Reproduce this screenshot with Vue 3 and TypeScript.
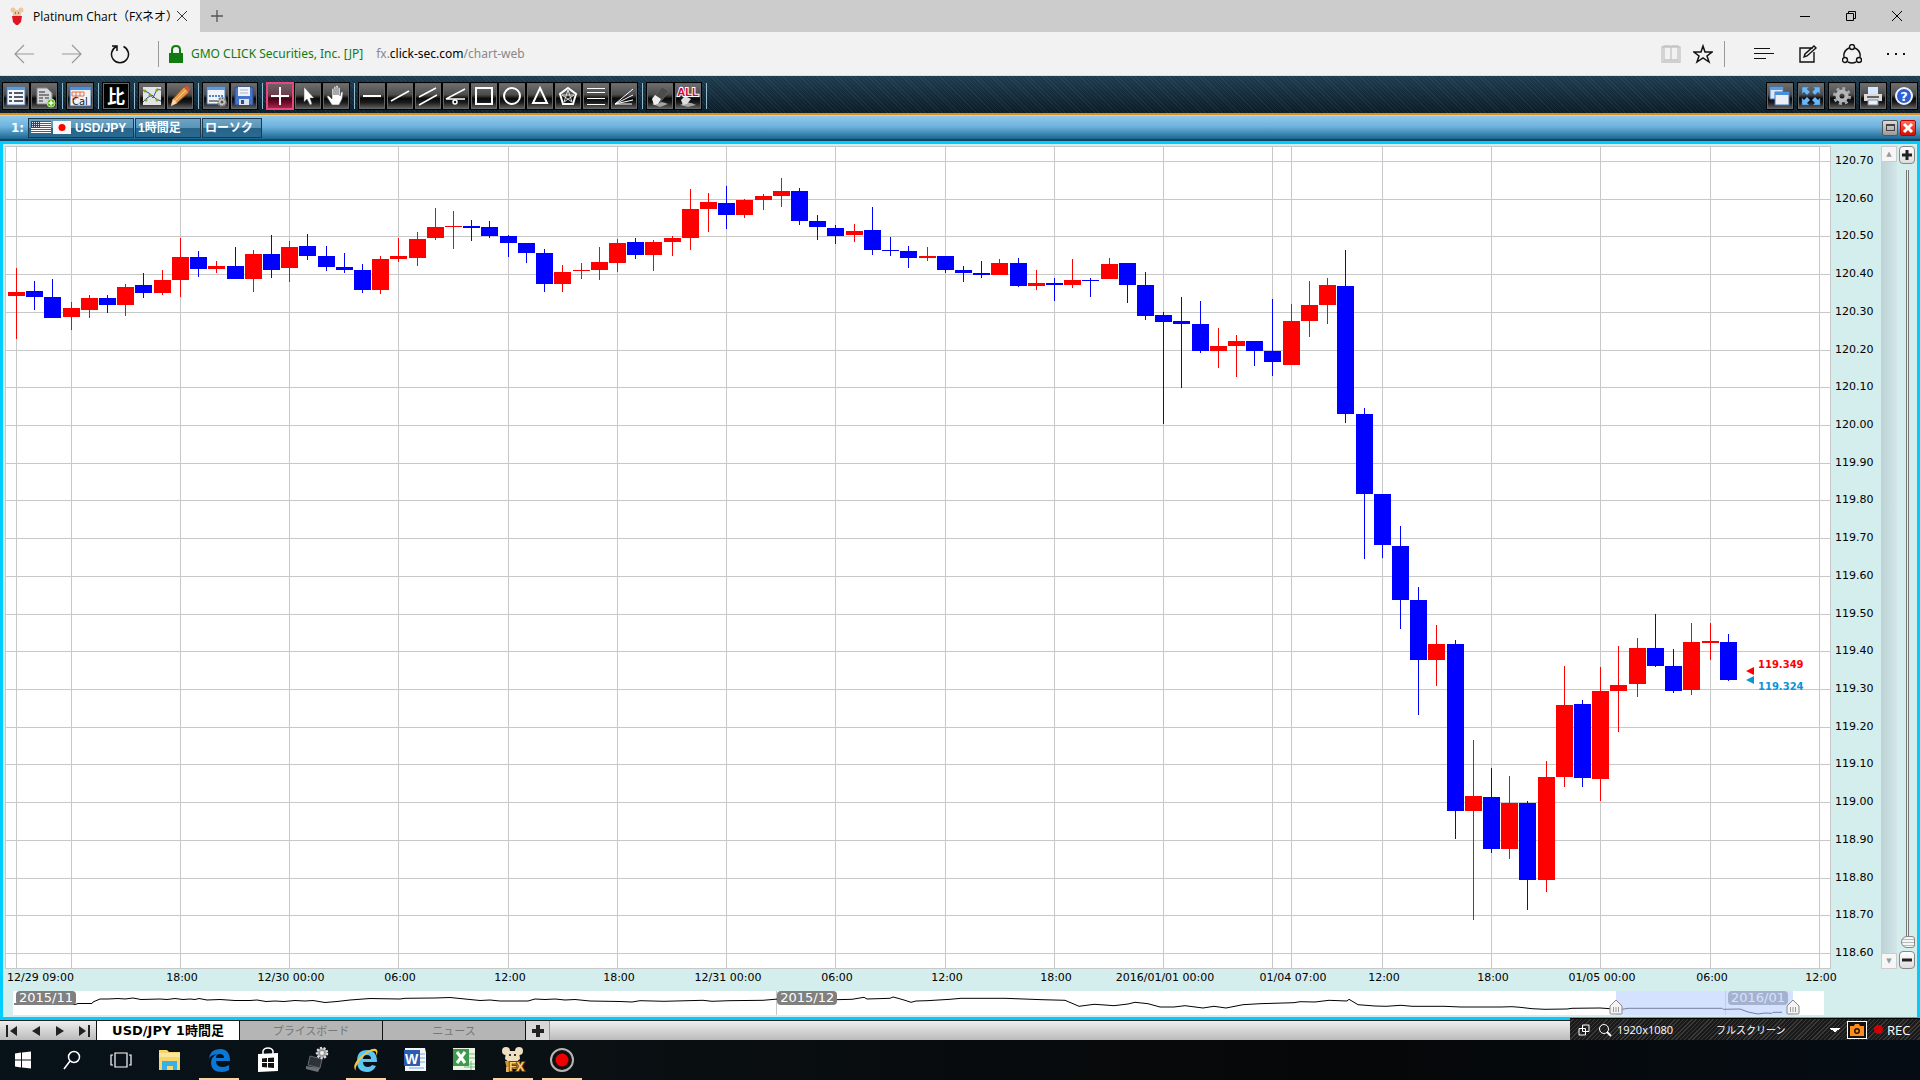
<script setup lang="ts">
import { computed, onBeforeUnmount, onMounted, ref } from 'vue'

interface Tool { id: string; label: string }
type Candle = [kind: 'R' | 'B', high: number, top: number, bottom: number, low: number]

/* Icon bodies, drawn on a 26 x 26 grid */
const icons: Record<string, string> = {
  list: '<path d="M4 4h18v18H4z" fill="#f4f6f9" stroke="#4a78b8"/><path d="M4 4h18v3H4z" fill="#5b9be0"/><path d="M6 10h3M6 14h3M6 18h3M11 10h9M11 14h9M11 18h9" stroke="#555b66" stroke-width="2"/>',
  addDoc: '<path d="M6 5h10l5 5v11H6z" fill="#d5d7da" stroke="#888"/><path d="M8 9h6M8 12h10M8 15h4M14 15h4M8 18h4" stroke="#666" stroke-width="1.500"/><circle cx="20" cy="20" r="4" fill="#55b51e" stroke="#b9ef83"/><path d="M17.500 20h5M20 17.500v5" stroke="#fff" stroke-width="1.500"/>',
  cal: '<path d="M3 4h21v19H3z" fill="#f2f2f2" stroke="#3d6cb0"/><path d="M3 4h21v3H3z" fill="#4d8fd8"/><path d="M5 9h12v4H5zM9 9v7M13 9v4M5 16h4" fill="none" stroke="#e36d4a"/><text x="5" y="22" font-size="10" font-family="DejaVu Sans" fill="#222">Cal</text>',
  compare: '<path d="M0 0h26v26H0z" fill="#000"/><text x="4" y="20" font-size="18" font-weight="700" font-family="Noto Sans CJK JP" fill="#fff">比</text>',
  graph: '<path d="M4 4h18v18H4z" fill="#e4e4e4"/><path d="M4 7l6 3 4 5 4-9 4 1M4 19l4-4 5-3 4 4 5 2" fill="none" stroke="#31539c"/><g fill="#7ea52d"><circle cx="6" cy="8" r="1.500"/><circle cx="11" cy="12" r="1.500"/><circle cx="18" cy="7" r="1.500"/><circle cx="7" cy="17" r="1.500"/><circle cx="18" cy="17" r="1.500"/></g>',
  pencil: '<path d="M4 23l2-7L17 4l5 5L10 20z" fill="#e49b4b" stroke="#9a5a22"/><path d="M4 23l2-7 4 4z" fill="#f4ddb9"/><path d="M17 4l2-1q4 0 4 4l-2 2z" fill="#d6503a"/><path d="M8 18L19 7" stroke="#ffd08b"/>',
  panel: '<path d="M4 4h18v17H4z" fill="#f1f3f6" stroke="#4a78b8"/><path d="M4 4h18v3H4z" fill="#5b9be0"/><path d="M6 13h14" stroke="#4a86cc" stroke-width="2" stroke-dasharray="2 1"/><path d="M6 18h8" stroke="#888" stroke-width="2"/><circle cx="19" cy="19" r="4" fill="#c9c9c9" stroke="#777" stroke-width="2" stroke-dasharray="2 1"/><circle cx="19" cy="19" r="1.500" fill="#555"/>',
  save: '<path d="M4 4h17l1 1v17H4z" fill="#4672c8" stroke="#2c4d95"/><path d="M7 4h12v9H7z" fill="#edf2fa"/><path d="M9 7h8M9 10h8" stroke="#aab6ca"/><path d="M8 16h10v6H8z" fill="#dde4f0"/><path d="M10 17h3v4h-3z" fill="#2c4d95"/>',
  cross: '<path d="M4 13h18M13 4v18" stroke="#fff" stroke-width="2"/>',
  arrow: '<path d="M9 4v15l3-3 3 6 2-1-2-6h4z" fill="#fff" stroke="#555" stroke-width=".5"/>',
  hand: '<path d="M9 22l-5-8q0-2 2-1l3 3V6q1-2 2 0v6-8q1-2 2 0v8-9q1-2 2 0v9-7q1-2 2 0v8l1-4q2-1 2 1l-1 6-3 6z" fill="#fff" stroke="#555" stroke-width=".6"/>',
  hline: '<path d="M4 13h18" stroke="#fff" stroke-width="2"/>',
  line: '<path d="M4 18L22 8" stroke="#fff" stroke-width="1.500"/>',
  parallel: '<path d="M4 14L21 5M4 22L22 12" stroke="#fff" stroke-width="1.500"/>',
  angle: '<path d="M22 6L3 16h19" fill="none" stroke="#fff" stroke-width="1.500"/><circle cx="12" cy="19" r="2" fill="none" stroke="#fff" stroke-width="1.500"/>',
  rect: '<path d="M5 5h16v16H5z" fill="none" stroke="#fff" stroke-width="2"/>',
  circle: '<circle cx="13" cy="13" r="8" fill="none" stroke="#fff" stroke-width="2"/>',
  triangle: '<path d="M13 5l7 15H6z" fill="none" stroke="#fff" stroke-width="2"/>',
  penta: '<path d="M13 5l8 6-3 10H8L5 11z" fill="none" stroke="#fff" stroke-width="2"/><path d="M13 7l4 12-10-7h12L9 19z" fill="none" stroke="#ddd"/>',
  fib: '<path d="M4 5.500h18M4 9.500h18M4 15.500h18M4 21.500h18" stroke="#fff"/>',
  fan: '<path d="M22 6L4 21l18-9M4 21l18-4M4 21l17 0" fill="none" stroke="#fff"/>',
  eraser: '<path d="M5 21q8-4 16 0l-8 3z" fill="#a5a5a5"/><path d="M6 15L15 4l7 4-9 12-4 1z" fill="#4c4c4c" stroke="#777" stroke-width=".5"/><path d="M5 16l3-4 6 4-3 5-4 1z" fill="#eee"/>',
  eraseAll: '<path d="M5 22q8-5 16 0l-8 2z" fill="#a5a5a5"/><path d="M6 17l4-4 6 3-4 5-4 1z" fill="#ddd"/><text x="13" y="13" text-anchor="middle" font-size="11" font-weight="700" font-family="Liberation Sans" fill="#cc0842" stroke="#fff" stroke-width="2" paint-order="stroke">ALL</text>',
  windows: '<path d="M3 4h13v12H3z" fill="#dfe7f2" stroke="#3f7cc4"/><path d="M3 4h13v3H3z" fill="#5b9be0"/><path d="M8 9h14v13H8z" fill="#eceff4" stroke="#3f7cc4"/><path d="M8 9h14v3H8z" fill="#4a8fdc"/>',
  expand: '<g fill="#6fb7f3" stroke="#2a6fb5" stroke-width=".5"><path d="M4 4h7l-2 2 3 3-3 3-3-3-2 2zM22 4h-7l2 2-3 3 3 3 3-3 2 2zM4 22h7l-2-2 3-3-3-3-3 3-2-2zM22 22h-7l2-2-3-3 3-3 3 3 2-2z"/></g>',
  gear: '<circle cx="13" cy="13" r="7.500" fill="none" stroke="#a6a8aa" stroke-width="3" stroke-dasharray="3 2.900"/><circle cx="13" cy="13" r="4.500" fill="none" stroke="#b4b6b8" stroke-width="4"/>',
  print: '<path d="M8 4h10v7H8z" fill="#d6e8fb"/><path d="M4 11h18v7H4z" fill="#d9dadc"/><path d="M7 13h12v2H7z" fill="#666"/><path d="M8 17h10v5H8z" fill="#e8f1fb" stroke="#889"/>',
  help: '<circle cx="13" cy="13" r="8" fill="#2d5fd3" stroke="#eef3ff" stroke-width="2"/><text x="13" y="18" text-anchor="middle" font-size="13" font-weight="700" font-family="DejaVu Sans" fill="#fff">?</text>',
}

const toolGroups: Tool[][] = [
  [{ id: 'list', label: 'List' }, { id: 'addDoc', label: 'Add' }],
  [{ id: 'cal', label: 'Calendar' }],
  [{ id: 'compare', label: 'Compare' }],
  [{ id: 'graph', label: 'Indicators' }, { id: 'pencil', label: 'Draw' }],
  [{ id: 'panel', label: 'Settings' }, { id: 'save', label: 'Save' }],
  [{ id: 'cross', label: 'Crosshair' }, { id: 'arrow', label: 'Select' }, { id: 'hand', label: 'Pan' }],
  [
    { id: 'hline', label: 'Horizontal line' }, { id: 'line', label: 'Trend line' },
    { id: 'parallel', label: 'Parallel lines' }, { id: 'angle', label: 'Angle' },
    { id: 'rect', label: 'Rectangle' }, { id: 'circle', label: 'Circle' },
    { id: 'triangle', label: 'Triangle' }, { id: 'penta', label: 'Pentagon' },
    { id: 'fib', label: 'Fibonacci' }, { id: 'fan', label: 'Fan' },
  ],
  [{ id: 'eraser', label: 'Erase' }, { id: 'eraseAll', label: 'Erase all' }],
]
const rightTools: Tool[] = [
  { id: 'windows', label: 'Windows' }, { id: 'expand', label: 'Full screen' },
  { id: 'gear', label: 'Options' }, { id: 'print', label: 'Print' }, { id: 'help', label: 'Help' },
]
const activeTool = ref('cross')

/* Hourly candles: distances below the top of the price range, 1131 units to the yen */
const candles: Candle[] = [
  ['R', 385, 457, 470, 597], ['B', 424, 454, 473, 512], ['B', 418, 472, 536, 536], ['R', 487, 504, 533, 572],
  ['R', 466, 475, 510, 536], ['B', 466, 475, 497, 521], ['R', 433, 442, 497, 530], ['B', 400, 436, 461, 476],
  ['R', 391, 421, 461, 467], ['R', 295, 352, 422, 473], ['B', 334, 352, 389, 413], ['R', 364, 379, 389, 401],
  ['B', 322, 379, 419, 419], ['R', 331, 343, 419, 458], ['B', 286, 343, 392, 416], ['R', 304, 322, 386, 428],
  ['B', 283, 319, 350, 361], ['B', 319, 349, 383, 395], ['B', 340, 382, 392, 401], ['B', 373, 391, 452, 461],
  ['R', 349, 358, 452, 463], ['R', 295, 349, 359, 368], ['R', 277, 298, 356, 380], ['R', 205, 262, 296, 302],
  ['R', 214, 259, 263, 328], ['B', 241, 259, 266, 305], ['B', 244, 262, 290, 296], ['B', 286, 289, 311, 353],
  ['B', 310, 310, 341, 371], ['B', 328, 340, 434, 458], ['R', 376, 397, 434, 458], ['R', 370, 391, 395, 419],
  ['R', 322, 367, 392, 422], ['R', 298, 310, 371, 398], ['B', 295, 307, 347, 359], ['R', 301, 307, 347, 395],
  ['R', 289, 295, 308, 350], ['R', 148, 208, 296, 332], ['R', 160, 187, 209, 278], ['B', 139, 190, 227, 269],
  ['R', 178, 181, 227, 236], ['R', 163, 169, 182, 212], ['R', 115, 154, 170, 203], ['B', 145, 154, 245, 257],
  ['B', 226, 244, 263, 302], ['B', 256, 265, 290, 314], ['R', 253, 274, 287, 308], ['B', 202, 271, 332, 347],
  ['B', 292, 331, 335, 350], ['B', 319, 334, 356, 386], ['R', 322, 349, 356, 365], ['B', 349, 349, 392, 401],
  ['B', 379, 391, 401, 428], ['B', 364, 400, 407, 416], ['R', 358, 370, 407, 407], ['B', 355, 370, 440, 443],
  ['R', 391, 430, 440, 452], ['B', 415, 430, 437, 485], ['R', 358, 421, 437, 446], ['B', 415, 421, 423, 473],
  ['R', 355, 373, 419, 419], ['B', 370, 370, 437, 491], ['B', 397, 436, 530, 542], ['B', 517, 526, 548, 854],
  ['B', 472, 544, 554, 746], ['B', 484, 553, 635, 641], ['R', 565, 619, 635, 686], ['R', 586, 604, 620, 713],
  ['B', 604, 604, 635, 680], ['B', 478, 634, 668, 709], ['R', 493, 544, 677, 677], ['R', 424, 496, 545, 593],
  ['R', 415, 436, 497, 554], ['B', 331, 439, 824, 851], ['B', 805, 823, 1064, 1259], ['B', 1063, 1063, 1217, 1256],
  ['B', 1159, 1219, 1382, 1469], ['B', 1342, 1381, 1562, 1727], ['R', 1456, 1513, 1562, 1640], ['B', 1501, 1513, 2015, 2099],
  ['R', 1801, 1969, 2015, 2342], ['B', 1885, 1972, 2129, 2141], ['R', 1909, 1990, 2129, 2159], ['B', 1984, 1990, 2222, 2312],
  ['R', 1864, 1912, 2222, 2258], ['R', 1579, 1696, 1913, 1943], ['B', 1681, 1693, 1916, 1943], ['R', 1582, 1654, 1919, 1985],
  ['R', 1519, 1636, 1655, 1778], ['R', 1495, 1525, 1634, 1673], ['B', 1423, 1525, 1580, 1583], ['B', 1528, 1579, 1655, 1661],
  ['R', 1450, 1507, 1652, 1667], ['R', 1450, 1504, 1511, 1562], ['B', 1483, 1507, 1622, 1625],
]

const timeMarks: [number, string][] = [
  [0, '12/29 09:00'], [3, ''], [9, '18:00'], [15, '12/30 00:00'], [21, '06:00'], [27, '12:00'], [33, '18:00'],
  [39, '12/31 00:00'], [45, '06:00'], [51, '12:00'], [57, '18:00'], [63, '2016/01/01 00:00'], [69, ''],
  [70, '01/04 07:00'], [75, '12:00'], [81, '18:00'], [87, '01/05 00:00'], [93, '06:00'], [99, '12:00'],
]

const plot = ref<HTMLElement | null>(null)
const width = ref(1826)
const height = ref(823)
let observer: ResizeObserver | undefined
onMounted(() => {
  observer = new ResizeObserver(([entry]) => {
    width.value = entry.contentRect.width
    height.value = entry.contentRect.height
  })
  if (plot.value) observer.observe(plot.value)
})
onBeforeUnmount(() => observer?.disconnect())

const xOf = (hour: number) => Math.round(((11 + 18.21 * hour) * width.value) / 1826)
const yOf = (units: number) => Math.round(((units - 19) * height.value) / 2469)

const bars = computed(() => candles.map(([kind, high, top, bottom, low], i) => {
  const half = Math.round((width.value * 8) / 1826)
  return {
    fill: kind === 'R' ? '#ff0000' : '#0000ff',
    wickX: xOf(i), wickY: yOf(high), wickH: Math.max(1, yOf(low) - yOf(high)),
    x: xOf(i) - half, y: yOf(top), w: half * 2 + 1, h: Math.max(1, yOf(bottom) - yOf(top)),
  }
}))
const columns = computed(() => timeMarks.map(([hour, label]) => ({ hour, label, x: xOf(hour) })))
const rows = computed(() => Array.from({ length: 22 }, (_, i) => ({
  label: (120.7 - i / 10).toFixed(2), y: yOf(64 + 113.14 * i),
})))

const overview = '1,13 62,13.500 65,12.500 79,12.500 80,11 87,8 95,8 105,7.500 112,8 120,7 128,8.500 147,8 154,8.500 162,7.500 170,8.500 177,8 182,8.500 186,7.500 194,9 207,8.500 222,9.500 237,9.500 244,9 253,10.500 262,10 271,10.500 282,9.500 292,10 300,9.500 312,11.500 324,10.500 337,9 357,7.500 387,8 392,7.300 422,7 437,6.500 452,8 467,9.500 477,9 487,10 515,10 522,8 532,8.500 542,8 552,9 562,8.500 577,10 607,10.500 619,11 627,9.700 651,10.300 690,9.300 699,10.300 716,9.700 750,9.300 765,8 823,8.700 839,8.300 851,6.300 854,8 877,7.300 880,6 884,7 891,9 898,11.300 903,10 914,9.700 937,8.300 948,7.300 992,7.300 1029,8.700 1052,9.300 1060,12.700 1066,15.300 1081,13.300 1092,14 1101,14.700 1115,13 1122,11.300 1135,12.700 1147,16 1161,16 1172,14.700 1190,17 1201,15.300 1213,17 1230,13.700 1247,12.700 1281,11.700 1287,10.700 1302,11 1316,9.300 1334,10 1336,8.300 1345,13.700 1362,15 1373,15.300 1388,14.300 1399,15.300 1431,15.300 1448,16 1488,16 1499,15.700 1507,16.300 1519,17.700 1532,18.300 1554,18 1559,17.300 1587,17 1602,18 1609,18.300 1615,17.300 1709,17.300 1710,18.300 1727,18 1735,21 1745,23 1752,22 1759,22.300 1760,21.300 1769,21.300'

const zoom = ref(0)
const mode = ref('フルスクリーン')

/* Taskbar pictures on a 28 x 28 grid */
const apps = [
  { name: 'Start', open: false, art: '<path d="M6 7.500l6-1v7H6zM13 6.500l9-1v8h-9zM6 14.500h6v7l-6-1zM13 14.500h9v8l-9-1z" fill="#fff"/>' },
  { name: 'Search', open: false, art: '<g fill="none" stroke="#fff" stroke-width="1.500"><circle cx="16" cy="11" r="5.500"/><path d="M12 15l-6 8"/></g>' },
  { name: 'Task view', open: false, art: '<g fill="none" stroke="#fff" stroke-width="1.200"><path d="M8 7h12v14H8zM6 9H4v10h2M22 9h2v10h-2"/></g>' },
  { name: 'Explorer', open: false, art: '<path d="M3 4h8l2 2h11v18H3z" fill="#f8d56b"/><path d="M3 7h21v4H3z" fill="#fbe69e"/><path d="M6 15h15v9h-4v-4h-6v4H6z" fill="#35b1e8"/>' },
  { name: 'Edge', open: true, art: '<path d="M4 13Q5 3 15 3q10 0 10 12H11q0 6 7 6 3 0 6-2v5q-3 2-7 2-11 0-11-9 0-6 6-9-7 1-8 5zM11 12h8q0-4-4-4t-4 4z" fill="#0b78d7" fill-rule="evenodd"/>' },
  { name: 'Store', open: false, art: '<path d="M4 8l20-1v18l-20 1z" fill="#fff"/><path d="M9 8V5q1-3 5-3t5 3v3" fill="none" stroke="#fff" stroke-width="1.500"/><path d="M8 12.500l5-.5v4H8zM14 12l6-.5v4.500h-6zM8 17h5v4.500l-5-.5zM14 17h6v5l-6-.5z" fill="#111"/>' },
  { name: 'Device', open: false, art: '<path d="M7 10l12 3-2 9-12-3z" fill="#2e3338" stroke="#667"/><path d="M3 20l14 2-2 4-12-3z" fill="#6a7076"/><circle cx="19" cy="7" r="5" fill="#999" stroke="#ddd" stroke-width="2.500" stroke-dasharray="2 1.500"/><circle cx="19" cy="7" r="2" fill="#eee"/>' },
  { name: 'Internet Explorer', open: true, art: '<path d="M24 20q-3 6-9 6-10 0-10-11T15 4q10 0 10 12H11q0 5 5 5 3 0 4-2zM11 13h8q0-4-4-4t-4 4z" fill="#5cc5f2" fill-rule="evenodd"/><path d="M4 25Q-1 20 8 11 19 1 24 3q3 2 0 7 1-5-2-5-6 0-12 7-8 9-6 13z" fill="#f6c63b"/>' },
  { name: 'Word', open: false, art: '<path d="M4 2h20l1 5v18H4z" fill="#f3f7fc"/><path d="M19 8h5M19 12h5M19 16h5M8 22h15" stroke="#7ea4d5"/><path d="M3 4l16 0v16L3 20z" fill="#2a5db0"/><text x="4" y="18" font-size="14" font-weight="700" font-family="Liberation Sans" fill="#fff">W</text>' },
  { name: 'Excel', open: false, art: '<path d="M3 2h22v22H3z" fill="#eaf5e6"/><path d="M19 8h6M19 12h6M14 18h11M14 21h11M21 15v9" stroke="#7cb885"/><path d="M3 3h16v17H3z" fill="#3c9a4b"/><path d="M7 6l8 11M15 6L7 17" stroke="#fff" stroke-width="3"/>' },
  { name: 'FX', open: true, art: '<g fill="#efe0c0"><circle cx="7" cy="5" r="4"/><circle cx="20" cy="5" r="4"/><path d="M7 5h13l1 8-5 4h-5l-5-4z"/></g><circle cx="11" cy="9" r="1"/><circle cx="16" cy="9" r="1"/><path d="M6 15h15l-1 8H8z" fill="#d29a3a"/><path d="M7 21h5v5H7z" fill="#e2b26c"/><text x="10" y="25" font-size="12" font-weight="700" font-family="Liberation Sans" fill="#ffcf6e" stroke="#6a4208" stroke-width="2" paint-order="stroke">FX</text>' },
  { name: 'Recorder', open: true, art: '<circle cx="14" cy="14" r="11" fill="#111" stroke="#b5b5b5" stroke-width="2"/><circle cx="14" cy="14" r="6.500" fill="#f00000"/>' },
]
</script>

<template>
  <div class="screen">
    <header class="tabbar">
      <div class="tab">
        <svg class="favicon" viewBox="0 0 16 18" width="16" height="18">
          <g fill="#e9c9a4"><circle cx="4" cy="3" r="2.500" /><circle cx="12" cy="3" r="2.500" /><path d="M4 3h8v6H4z" /></g>
          <path d="M3 9h10l-1 6-3 3H7l-3-3z" fill="#dd1622" /><path d="M6 6h1M9 6h1" stroke="#333" />
        </svg>
        <span class="tab-title">Platinum Chart（FXネオ）</span>
        <button class="plain" aria-label="Close tab"><svg width="12" height="12" viewBox="0 0 12 12"><path d="M1 1l10 10M11 1L1 11" stroke="#333" /></svg></button>
      </div>
      <button class="plain new-tab" aria-label="New tab"><svg width="14" height="14" viewBox="0 0 14 14"><path d="M7 1v12M1 7h12" stroke="#555" stroke-width="1.300" /></svg></button>
      <div class="window-buttons">
        <button class="plain" aria-label="Minimize"><svg width="12" height="12" viewBox="0 0 12 12"><path d="M1 6.500h10" stroke="#000" /></svg></button>
        <button class="plain" aria-label="Restore"><svg width="12" height="12" viewBox="0 0 12 12"><path d="M1.500 3.500h7v7h-7zM3.500 3.500v-2h7v7h-2" fill="none" stroke="#000" /></svg></button>
        <button class="plain" aria-label="Close"><svg width="12" height="12" viewBox="0 0 12 12"><path d="M1 1l10 10M11 1L1 11" stroke="#000" /></svg></button>
      </div>
    </header>

    <nav class="address">
      <button class="plain" aria-label="Back"><svg width="20" height="20" viewBox="0 0 20 20"><path d="M20 10H1M10 1L1 10l9 9" fill="none" stroke="#999" stroke-width="1.200" /></svg></button>
      <button class="plain" aria-label="Forward"><svg width="20" height="20" viewBox="0 0 20 20"><path d="M0 10h19M10 1l9 9-9 9" fill="none" stroke="#999" stroke-width="1.200" /></svg></button>
      <button class="plain" aria-label="Reload"><svg width="20" height="20" viewBox="0 0 20 20"><path d="M13.500 2.500a8.500 8.500 0 1 1-7 0M2 2h5v5" fill="none" stroke="#111" stroke-width="1.500" /></svg></button>
      <div class="site">
        <svg width="14" height="18" viewBox="0 0 14 18"><path d="M0 8h14v10H0z" fill="#107c10" /><path d="M3 8V5q0-4 4-4t4 4v3" fill="none" stroke="#107c10" stroke-width="2" /></svg>
        <span class="owner">GMO CLICK Securities, Inc. [JP]</span>
        <a class="url" href="#">fx.<b>click-sec.com</b>/chart-web</a>
      </div>
      <div class="browser-tools">
        <button class="plain" aria-label="Reading view"><svg width="20" height="20" viewBox="0 0 20 20"><path d="M1 3h18v15H1zM3 2h6q1 0 1 2v12H3zM17 2h-6q-1 0-1 2v12h7z" fill="none" stroke="#c4c4c4" stroke-width="1.300" /></svg></button>
        <button class="plain" aria-label="Favourite"><svg width="20" height="20" viewBox="0 0 20 20"><path d="M10 2l2 6h7l-5 4 2 6-6-4-6 4 2-6-5-4h7z" fill="none" stroke="#111" stroke-width="1.500" /></svg></button>
        <i class="rule"></i>
        <button class="plain wide" aria-label="Hub"><svg width="20" height="20" viewBox="0 0 20 20"><path d="M0 4.500h16M0 9.500h20M0 14.500h12" stroke="#111" /></svg></button>
        <button class="plain wide" aria-label="Note"><svg width="20" height="20" viewBox="0 0 20 20"><path d="M15 4H2v14h14V8M6 13l1-3 9-8 2 2-9 8z" fill="none" stroke="#111" stroke-width="1.400" /></svg></button>
        <button class="plain wide" aria-label="Share"><svg width="20" height="20" viewBox="0 0 20 20"><g fill="none" stroke="#111" stroke-width="1.400"><circle cx="10" cy="3" r="2.500" /><circle cx="3" cy="16" r="2.500" /><circle cx="17" cy="16" r="2.500" /><path d="M7 4q-6 3-5 9M13 4q6 3 5 9M6 18q4 2 8 0" /></g></svg></button>
        <button class="plain wide" aria-label="More"><svg width="20" height="20" viewBox="0 0 20 20"><path d="M1 10h2M9 10h2M17 10h2" stroke="#111" stroke-width="2" /></svg></button>
      </div>
    </nav>

    <div class="toolbar">
      <template v-for="(group, g) in toolGroups" :key="g">
        <button
          v-for="tool in group" :key="tool.id" class="tool" :class="{ active: tool.id === activeTool }"
          :aria-label="tool.label" @click="activeTool = tool.id"
        ><svg viewBox="0 0 26 26" v-html="icons[tool.id]"></svg></button>
        <i class="divider"></i>
      </template>
      <div class="right-tools">
        <button v-for="tool in rightTools" :key="tool.id" class="tool" :aria-label="tool.label"><svg viewBox="0 0 26 26" v-html="icons[tool.id]"></svg></button>
      </div>
    </div>

    <div class="symbolbar">
      <span class="number">1:</span>
      <button class="sym pair">
        <svg width="20" height="13" viewBox="0 0 20 13"><path d="M0 0h20v13H0z" fill="#fff" /><path d="M0 .5h20M0 2.500h20M0 4.500h20M0 6.500h20M0 8.500h20M0 10.500h20M0 12.500h20" stroke="#e0202c" /><path d="M0 0h9v7H0z" fill="#27408f" /><path d="M1 1.500h8M1 3.500h8M1 5.500h8" stroke="#dfe4f4" stroke-dasharray="1 1" /></svg>
        <svg width="18" height="13" viewBox="0 0 18 13"><path d="M0 0h18v13H0z" fill="#f8f8f8" /><circle cx="9" cy="6.500" r="3.500" fill="#f00" /></svg>
        <span>USD/JPY</span>
      </button>
      <button class="sym period">1時間足</button>
      <button class="sym style">ローソク</button>
      <div class="pane-buttons">
        <button class="max" aria-label="Maximize pane"><i></i></button>
        <button class="shut" aria-label="Close pane"><svg width="12" height="12" viewBox="0 0 12 12"><path d="M2 2l8 8M10 2l-8 8" stroke="#fff" stroke-width="3" /></svg></button>
      </div>
    </div>

    <main class="frame">
      <div class="chart-row">
        <div ref="plot" class="plot">
          <svg class="canvas" :width="width" :height="height" shape-rendering="crispEdges">
            <rect width="100%" height="100%" fill="#fff" />
            <rect v-for="c in columns" :key="'c' + c.hour" :x="c.x" y="0" width="1" height="100%" fill="#c8c8c8" />
            <rect v-for="r in rows" :key="r.label" x="0" :y="r.y" width="100%" height="1" fill="#c8c8c8" />
            <g v-for="(b, i) in bars" :key="i" :fill="b.fill">
              <rect :x="b.wickX" :y="b.wickY" width="1" :height="b.wickH" />
              <rect :x="b.x" :y="b.y" :width="b.w" :height="b.h" />
            </g>
          </svg>
          <div class="quotes" :style="{ left: xOf(95) + 'px', top: yOf(1556) + 'px' }">
            <span class="ask">119.349</span>
            <svg width="8" height="18" viewBox="0 0 8 18"><path d="M8 1v8L0 5z" fill="#f00" /><path d="M8 10v8l-8-4z" fill="#0c93d8" /></svg>
            <span class="bid">119.324</span>
          </div>
        </div>
        <div class="price-axis">
          <span v-for="r in rows" :key="r.label" :style="{ top: r.y + 'px' }">{{ r.label }}</span>
        </div>
        <div class="scroll">
          <button aria-label="Scroll up">▲</button>
          <button aria-label="Scroll down">▼</button>
        </div>
        <div class="zoom">
          <button aria-label="Zoom in"><svg width="10" height="10" viewBox="0 0 10 10"><path d="M5 0v10M0 5h10" stroke="#222" stroke-width="3" /></svg></button>
          <div class="slider"><input v-model="zoom" type="range" min="0" max="100" aria-label="Zoom" /></div>
          <button aria-label="Zoom out"><svg width="10" height="10" viewBox="0 0 10 10"><path d="M0 5h10" stroke="#222" stroke-width="3" /></svg></button>
        </div>
      </div>
      <div class="time-axis">
        <template v-for="c in columns" :key="c.hour">
          <span v-if="c.label" :class="{ first: c.hour === 0 }" :style="{ left: c.x + 'px' }">{{ c.label }}</span>
        </template>
      </div>
      <div class="overview">
        <svg class="wave" viewBox="0 0 1811 24" preserveAspectRatio="none">
          <path d="M763.500 0v24M1712.500 0v24" stroke="#c8c8c8" />
          <polyline :points="overview" fill="none" stroke="#000" />
        </svg>
        <span class="month nov">2015/11</span>
        <span class="month dec">2015/12</span>
        <span class="month jan">2016/01</span>
        <div class="range">
          <svg v-for="side in ['start', 'end']" :key="side" :class="side" width="14" height="16" viewBox="0 0 14 16"><path d="M1 7l6-6 6 6v7q0 1-1 1H2q-1 0-1-1z" fill="#f4f4f4" stroke="#888" /><path d="M4.500 8v5M7 8v5M9.500 8v5" stroke="#999" /></svg>
        </div>
      </div>
    </main>

    <div class="sheets">
      <div class="sheet-nav">
        <button class="plain" aria-label="First"><svg width="14" height="12" viewBox="0 0 14 12"><path d="M2 0v12" stroke="#222" stroke-width="2" /><path d="M12 1v10L5 6z" fill="#222" /></svg></button>
        <button class="plain" aria-label="Previous"><svg width="14" height="12" viewBox="0 0 14 12"><path d="M11 1v10L3 6z" fill="#222" /></svg></button>
        <button class="plain" aria-label="Next"><svg width="14" height="12" viewBox="0 0 14 12"><path d="M3 1v10l8-5z" fill="#222" /></svg></button>
        <button class="plain" aria-label="Last"><svg width="14" height="12" viewBox="0 0 14 12"><path d="M12 0v12" stroke="#222" stroke-width="2" /><path d="M2 1v10l7-5z" fill="#222" /></svg></button>
      </div>
      <button class="sheet current">USD/JPY 1時間足</button>
      <button class="sheet">プライスボード</button>
      <button class="sheet">ニュース</button>
      <button class="sheet-add" aria-label="Add sheet"><svg width="12" height="12" viewBox="0 0 12 12"><path d="M6 0v12M0 6h12" stroke="#222" stroke-width="4" /></svg></button>
      <div class="recorder">
        <svg width="12" height="12" viewBox="0 0 12 12"><path d="M1 4.500h6.500v6.500H1zM4.500 1h6.500v6.500H4.500z" fill="none" stroke="#fff" /></svg>
        <svg class="lens" width="14" height="14" viewBox="0 0 14 14"><circle cx="6" cy="6" r="4.500" fill="none" stroke="#fff" /><path d="M9 9l4 4" stroke="#fff" stroke-width="2" /></svg>
        <span class="size">1920x1080</span>
        <select v-model="mode" aria-label="Capture mode"><option>フルスクリーン</option></select>
        <button class="camera" aria-label="Screenshot"><svg width="14" height="12" viewBox="0 0 14 12"><path d="M0 2h4l1-2h4l1 2h4v10H0z" fill="#ff8c1a" /><circle cx="7" cy="7" r="3" fill="#221400" /><circle cx="7" cy="7" r="1.500" fill="#ff8c1a" /></svg></button>
        <button class="rec"><i></i>REC</button>
      </div>
    </div>

    <footer class="taskbar">
      <button v-for="app in apps" :key="app.name" class="app" :class="{ open: app.open }" :aria-label="app.name">
        <svg width="28" height="28" viewBox="0 0 28 28" v-html="app.art"></svg>
      </button>
    </footer>
  </div>
</template>

<style>
body { margin: 0; background: #060b10; }
</style>

<style scoped>
.screen {
  display: flex; flex-direction: column; min-height: 100vh; overflow: hidden;
  font: 12px/16px "Open Sans", "Noto Sans CJK JP", sans-serif; color: #000;
}
button, select { font: inherit; box-sizing: border-box; cursor: pointer; }
.plain { border: 0; background: none; padding: 0; display: flex; align-items: center; justify-content: center; }
svg { display: block; flex: none; }

.tabbar { display: flex; height: 32px; background: #ccc; }
.tab { width: 200px; box-sizing: border-box; padding: 0 12px 0 9px; background: #f2f2f2; display: flex; align-items: center; }
.tab-title { width: 133px; margin: 2px 10px 0 8px; white-space: nowrap; }
.new-tab { width: 34px; }
.window-buttons { margin-left: auto; display: flex; }
.window-buttons .plain { width: 46px; }

.address { display: flex; align-items: center; height: 44px; padding-left: 14px; gap: 28px; background: #f2f2f2; border-bottom: 1px solid #ddd; box-sizing: border-box; }
.site { display: flex; align-items: center; height: 26px; padding-left: 10px; border-left: 1px solid #999; font-family: "Noto Sans", sans-serif; }
.owner { margin: 0 13px 0 8px; color: #107c10; }
.url { color: #888; text-decoration: none; }
.url b { color: #000; font-weight: 400; }
.browser-tools { margin-left: auto; padding-right: 2px; display: flex; align-items: center; height: 26px; }
.browser-tools .plain { width: 32px; }
.browser-tools .wide { width: 44px; }
.rule { width: 1px; height: 26px; margin: 0 17px 0 5px; background: #999; }

.toolbar {
  display: flex; align-items: center; height: 39px; padding: 2px 2px 0; box-sizing: border-box;
  border-bottom: 2px solid #d9901c;
  background: repeating-linear-gradient(45deg, rgba(255,255,255,.05) 0 1px, transparent 1px 3px), linear-gradient(#1e3d50, #0b1c27);
}
.tool {
  flex: none; width: 28px; height: 28px; padding: 0; border: 1px solid #000; outline: 1px solid #666; outline-offset: -2px;
  background: linear-gradient(#707070, #4c4c4c 45%, #090909 60%, #1c1c1c 75%, #666);
}
.tool svg { width: 26px; height: 26px; }
.tool.active { border-color: #e8467c; outline-color: #e8467c; background: linear-gradient(#6e6468, #6d3e4c 45%, #430616 60%, #6e0b28 75%, #b02a55); }
.divider { flex: none; width: 1px; height: 26px; margin: 0 3px 0 4px; background: #8fbcd3; }
.right-tools { margin-left: auto; display: flex; gap: 3px; }

.symbolbar {
  display: flex; align-items: center; height: 26px; padding: 0 4px 0 11px; box-sizing: border-box;
  border-top: 1px solid #b7d6e8; border-bottom: 2px solid #17435f;
  background: linear-gradient(#92c9ea, #6eb3dd 45%, #1b6792);
}
.number { width: 17px; color: #fff; font: 700 12px/16px "DejaVu Sans", sans-serif; }
.sym {
  display: flex; align-items: center; height: 20px; padding: 0 2px; margin-right: 1px; border: 1px solid #1e3b4d; color: #fff;
  font: 700 12px/16px "Liberation Sans", "Noto Sans CJK JP", sans-serif;
  background: linear-gradient(#6ba4c6, #5a94b6 48%, #28648a 52%, #2b6a90);
}
.pair { width: 106px; gap: 2px; }
.pair span { margin-left: 2px; }
.period { width: 66px; }
.style { width: 60px; }
.pane-buttons { margin-left: auto; display: flex; gap: 2px; }
.pane-buttons button { width: 16px; height: 16px; padding: 0; border-radius: 2px; display: flex; align-items: center; justify-content: center; }
.max { border: 1px solid #555; background: linear-gradient(#ddd, #999); }
.max i { width: 7px; height: 4px; border: 1px solid #444; border-top-width: 2px; }
.shut { border: 1px solid #b00; background: linear-gradient(#ff7058, #d40d00); }

.frame {
  flex: 1; display: flex; flex-direction: column; padding: 2px 0; border: 3px solid #0cf;
  background: #d4eded; font: 11px/14px "DejaVu Sans", sans-serif;
}
.chart-row { flex: 1; display: flex; padding-left: 2px; min-height: 300px; }
.plot { position: relative; z-index: 0; flex: 1; min-width: 0; outline: 1px solid #c8c8c8; outline-offset: -1px; }
.canvas { position: absolute; inset: 0; z-index: -1; }
.quotes { position: absolute; width: 60px; font: 700 10px/14px "DejaVu Sans", sans-serif; }
.quotes span { display: block; margin-left: 12px; }
.quotes svg { margin: -6px 0 -4px; }
.ask { color: #f00; }
.bid { color: #0c93d8; }
.price-axis { position: relative; width: 50px; }
.price-axis span { position: absolute; left: 4px; transform: translateY(-50%); }
.scroll { width: 16px; display: flex; flex-direction: column; justify-content: space-between; background: linear-gradient(90deg, #bcd2d5, #d3e6e9); }
.scroll button { width: 16px; height: 16px; padding: 0; border: 1px solid #ccc; background: #f6f6f6; color: #999; font: 7px/12px "DejaVu Sans", sans-serif; }
.zoom { width: 20px; display: flex; flex-direction: column; align-items: center; }
.zoom button { width: 16px; height: 18px; padding: 0; border: 1px solid #888; border-radius: 4px; background: linear-gradient(#fff, #ddd); display: flex; align-items: center; justify-content: center; }
.slider { position: relative; flex: 1; width: 16px; margin: 6px 0 3px; }
.slider::before { content: ""; position: absolute; left: 7px; top: 0; bottom: 8px; width: 1px; border: 1px solid #777; border-width: 0 1px; background: #eee; }
.slider input { position: absolute; inset: 0; width: 16px; height: 100%; margin: 0 0 0 1px; appearance: none; background: none; writing-mode: vertical-lr; direction: rtl; }
.slider input::-webkit-slider-thumb { appearance: none; width: 14px; height: 12px; border: 1px solid #888; border-radius: 6px 3px 3px 6px; background: repeating-linear-gradient(#f5f5f5 0 2px, #bbb 2px 3px); }

.time-axis { position: relative; height: 22px; margin-left: 4px; }
.time-axis span { position: absolute; top: 2px; transform: translateX(-50%); white-space: nowrap; }
.time-axis .first { transform: translateX(-11px); }
.overview { position: relative; height: 24px; margin: 0 93px 0 10px; background: #fff; }
.wave { width: 100%; height: 100%; }
.month { position: absolute; top: 0; padding: 0 3px; border-radius: 4px; background: #808080; color: #fff; font-size: 13px; line-height: 14px; }
.nov { left: 3px; }
.dec { left: 42.2%; }
.jan { left: 94.7%; }
.range { position: absolute; top: 0; bottom: 0; left: 88.5%; right: 1.7%; background: rgba(187, 208, 255, .62); }
.range svg { position: absolute; bottom: 0; }
.start { left: -7px; }
.end { right: -7px; }

.sheets { position: relative; display: flex; height: 20px; border-top: 1px solid #222; box-sizing: border-box; background: linear-gradient(#eee, #bbb); }
.sheet-nav { display: flex; width: 96px; justify-content: space-around; align-items: center; }
.sheet { width: 143px; padding: 0; border: 0; border-right: 1px solid #111; background: #b5b5b5; color: #777; font-size: 11px; line-height: 18px; }
.current { width: 144px; border-left: 1px solid #111; background: #fff; color: #000; font: 700 13px/18px "DejaVu Sans", "Noto Sans CJK JP", sans-serif; }
.sheet-add { width: 24px; padding: 0; border: 0; border-right: 1px solid #999; background: #d8d8d8; display: flex; align-items: center; justify-content: center; }
.recorder {
  position: absolute; right: 0; bottom: 0; width: 350px; height: 22px; padding: 0 8px; box-sizing: border-box;
  display: flex; align-items: center; color: #fff; border-top: 1px solid #000;
  background: repeating-linear-gradient(135deg, #1a1a1a 0 2px, #3a3a3a 2px 3px);
}
.lens { margin-left: 8px; }
.size { width: 99px; margin-left: 5px; font-size: 11px; }
.recorder select {
  width: 131px; padding: 0; border: 0; color: #fff; font-size: 10px; appearance: none;
  background: linear-gradient(45deg, transparent 50%, #fff 50%) 114px 6px / 5px 5px no-repeat, linear-gradient(-45deg, transparent 50%, #fff 50%) 119px 6px / 5px 5px no-repeat;
}
.camera { flex: none; width: 20px; height: 18px; padding: 0; border: 1px solid #fff; background: #111; display: flex; align-items: center; justify-content: center; }
.rec { display: flex; align-items: center; gap: 4px; margin-left: 7px; padding: 0; border: 0; background: none; color: #fff; font-size: 13px; }
.rec i { width: 9px; height: 9px; border-radius: 50%; background: #d00000; }

.taskbar { display: flex; height: 40px; background: linear-gradient(90deg, #071219, #0a1013 30%, #060708 70%, #050d14); }
.app { width: 49px; padding: 0 6px 0 3px; border: 0; background: none; display: flex; justify-content: center; }
.app svg { padding: 6px 6px 4px; border-bottom: 2px solid transparent; }
.app.open svg { border-color: #fbd3a2; }
</style>
